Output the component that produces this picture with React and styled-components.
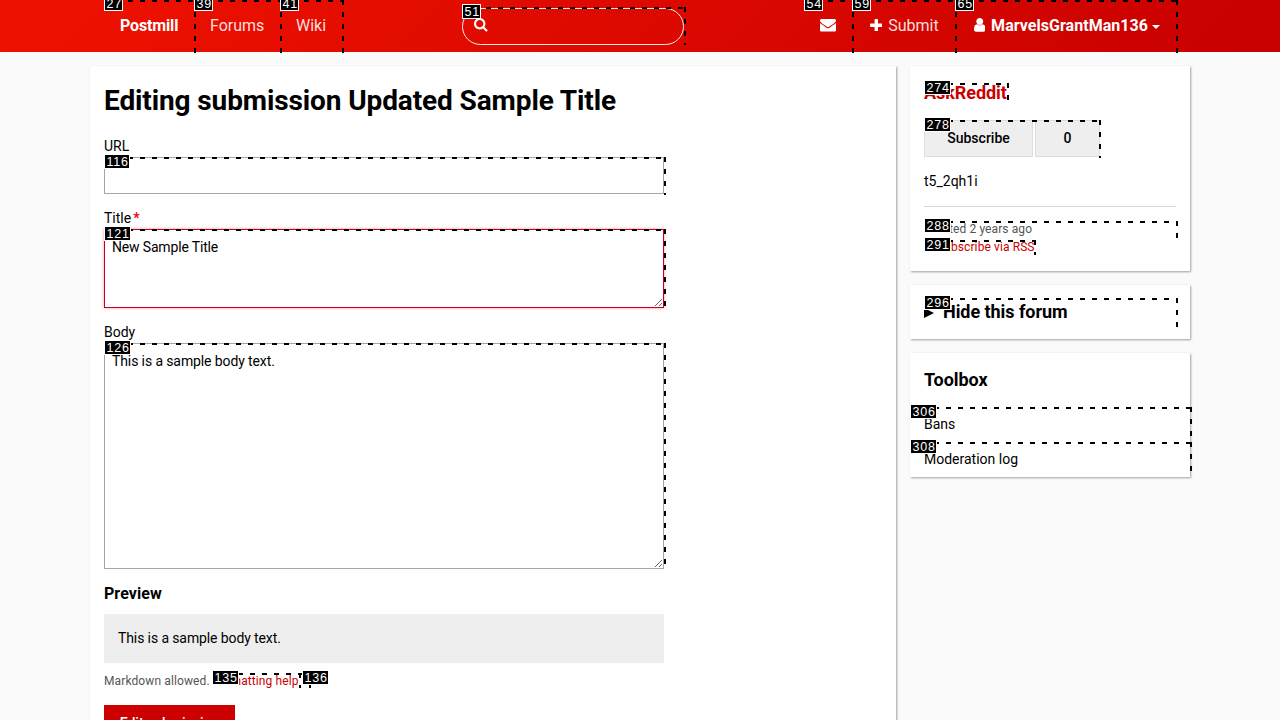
import React from "react";
import styled, { createGlobalStyle } from "styled-components";

const GlobalStyle = createGlobalStyle`
  *, *::before, *::after { box-sizing: border-box; }
  html, body { margin: 0; height: 720px; overflow: hidden; }
  body {
    background: #fafafa;
    color: #000;
    font: 14px/21px Roboto, "Liberation Sans", sans-serif;
  }
`;

const Page = styled.div`
  position: relative;
  width: 1280px;
  height: 720px;
  overflow: hidden;
`;

const Header = styled.header`
  height: 52px;
  padding: 0 104px;
  display: flex;
  align-items: center;
  justify-content: space-between;
  background: linear-gradient(135deg, #f01200, #c80000);
`;

const Nav = styled.nav`
  display: flex;
  height: 100%;
`;

const NavItem = styled.a`
  display: flex;
  align-items: center;
  width: ${(p) => p.$width}px;
  padding: 0 0 2px 16px;
  font-size: 16px;
  font-weight: ${(p) => (p.$bold ? 700 : 400)};
  letter-spacing: ${(p) => p.$spacing || 0}px;
  white-space: nowrap;
  color: ${(p) => (p.$bold ? "#fff" : "rgba(255, 255, 255, 0.88)")};
`;

const Icon = styled.svg`
  display: block;
  flex: none;
  fill: ${(p) => p.$fill || "#fff"};
  margin: ${(p) => p.$margin || 0};
`;

const Caret = styled.span`
  margin: 3px 0 0 4px;
  border: 4px solid transparent;
  border-top-color: #fff;
  border-bottom: 0;
`;

const SearchBox = styled.div`
  width: 222px;
  height: 37px;
  margin-top: 1px;
  padding: 9px 11px;
  border: 1px solid rgba(255, 255, 255, 0.9);
  border-radius: 19px;
`;

const Columns = styled.div`
  display: flex;
  align-items: flex-start;
  gap: 14px;
  padding: 14px 90px 0;
`;

const Card = styled.section`
  background: #fff;
  padding: ${(p) => p.$pad || "14px"};
  box-shadow: 1px 1px 2px rgba(0, 0, 0, 0.36);
`;

const MainCard = styled(Card)`
  width: 806px;
  height: 700px;
`;

const Sidebar = styled.aside`
  width: 280px;
  display: flex;
  flex-direction: column;
  gap: 14px;
`;

const PageTitle = styled.h1`
  margin: 0 0 13px;
  font-size: 28px;
  line-height: 42px;
  font-weight: 700;
  letter-spacing: -0.11px;
`;

const Form = styled.form`
  width: 560px;
`;

const Field = styled.div`
  display: flex;
  flex-direction: column;
  margin-bottom: 13px;
`;

const Label = styled.label`
  line-height: 22px;
  word-spacing: -0.8px;
`;

const Required = styled.b`
  margin-left: -0.5px;
  color: #e02;
`;

const TextInput = styled.input`
  height: 37px;
  border: 1px solid #a6a6a6;
  padding: 7px;
  outline: 0;
  background: #fff;
`;

const TextArea = styled.textarea`
  display: block;
  width: 100%;
  height: ${(p) => p.$height}px;
  margin: 0;
  padding: 7px;
  border: 1px solid ${(p) => (p.$invalid ? "#c00020" : "#a6a6a6")};
  box-shadow: ${(p) => (p.$invalid ? "0 0 3px rgba(255, 0, 0, 0.45)" : "none")};
  outline: 0;
  background: #fff;
  color: #000;
  font: inherit;
  letter-spacing: ${(p) => p.$spacing || 0}px;
  resize: vertical;
`;

const PreviewTitle = styled.h3`
  margin: 0 0 8px;
  font-size: 16px;
  line-height: 24px;
  letter-spacing: 0.06px;
`;

const Preview = styled.div`
  padding: 14px;
  height: 49px;
  background: #eee;
  letter-spacing: -0.11px;
`;

const Help = styled.p`
  margin: 9px 0 15px;
  font-size: 12px;
  line-height: 18px;
  letter-spacing: 0.11px;
  color: #555;
`;

const Link = styled.a`
  color: #c00;
`;

const SubmitButton = styled.button`
  display: block;
  width: 131px;
  height: 37px;
  padding: 0;
  border: 0;
  background: #c00;
  color: #fff;
  font: 500 14px/21px Roboto, sans-serif;
`;

const SideTitle = styled.h2`
  margin: 0;
  padding-bottom: 2px;
  font-size: 18px;
  line-height: 25px;
  font-weight: 700;
  letter-spacing: -0.05px;
`;

const SubscribeRow = styled.div`
  display: flex;
  gap: 2px;
  margin: 13px 0 14px;
`;

const SubscribePart = styled.span`
  width: ${(p) => p.$width}px;
  height: 37px;
  border: 1px solid #ddd;
  background: #eee;
  font-weight: 500;
  line-height: 35px;
  text-align: center;
`;

const Description = styled.p`
  margin: 0;
  padding-bottom: 14px;
  border-bottom: 1px solid #d8d8d8;
`;

const Meta = styled.div`
  padding: 13px 0 1px;
  display: flex;
  flex-direction: column;
  font-size: 12px;
  line-height: 18px;
  letter-spacing: 0.1px;
  color: #555;
`;

const FeedLink = styled(Link)`
  display: flex;
  align-items: center;
`;

const Summary = styled.div`
  display: flex;
  align-items: center;
  gap: 9px;
`;

const Arrow = styled.span`
  border: 5px solid transparent;
  border-left: 10px solid #000;
  border-right: 0;
`;

const ToolList = styled.nav`
  display: flex;
  flex-direction: column;
  margin: 13px -14px 0;
`;

const ToolItem = styled.a`
  height: 35px;
  padding: 0 14px;
  line-height: 35px;
`;

const dashes = (direction) =>
  `repeating-linear-gradient(${direction}, #000 0 5px, transparent 5px 12px)`;

const HintBox = styled.div`
  position: absolute;
  pointer-events: none;
  left: ${(p) => p.$x}px;
  top: ${(p) => p.$y}px;
  width: ${(p) => p.$w + 2}px;
  height: ${(p) => p.$h}px;
  background:
    ${dashes("to right")} 0 0 / calc(100% - 2px) 2px no-repeat,
    ${dashes("to bottom")} 100% 0 / 2px 100% no-repeat;
`;

const HintLabel = styled.span`
  position: absolute;
  left: ${(p) => p.$x}px;
  top: ${(p) => p.$y}px;
  height: 15px;
  padding: 0 0.4px 0 1.6px;
  border: 1px solid #fff;
  background: #000;
  color: #fff;
  font: 12.5px/14px "Liberation Sans", Arial, sans-serif;
  letter-spacing: 0.7px;
`;

/* id, box x, box y, box width, box height, label x, label y */
const hints = [
  [27, 104, 0, 90, 53, 104, -4],
  [39, 194, 0, 86, 53, 194, -4],
  [41, 280, 0, 62, 53, 280, -4],
  [51, 462, 7, 222, 38, 462, 4],
  [54, 804, 0, 48, 53, 804, -4],
  [59, 852, 0, 103, 53, 852, -4],
  [65, 955, 0, 221, 53, 955, -4],
  [116, 104, 157, 560, 38, 104, 154],
  [121, 104, 229, 560, 78, 104, 226],
  [126, 104, 343, 560, 225, 104, 340],
  [135, 214, 673, 85, 15, 212, 670],
  [136, 301, 673, 8, 15, 302, 670],
  [274, 924, 83, 83, 18, 924, 80],
  [278, 924, 120, 175, 38, 924, 117],
  [288, 924, 221, 252, 18, 924, 218],
  [291, 924, 240, 110, 15, 924, 237],
  [296, 924, 298, 252, 29, 924, 295],
  [306, 910, 407, 280, 35, 910, 404],
  [308, 910, 442, 280, 29, 910, 439],
];

const SEARCH =
  "M1216 832q0-185-131.5-316.5t-316.5-131.5-316.5 131.5-131.5 316.5 131.5 316.5 316.5 131.5 316.5-131.5 131.5-316.5zm512 832q0 52-38 90t-90 38q-54 0-90-38l-343-342q-179 124-399 124-143 0-273.5-55.5t-225-150-150-225-55.5-273.5 55.5-273.5 150-225 225-150 273.5-55.5 273.5 55.5 225 150 150 225 55.5 273.5q0 220-124 399l343 343q37 37 37 90z";
const MAIL =
  "M1792 710v794q0 66-47 113t-113 47h-1472q-66 0-113-47t-47-113v-794q44 49 101 87 362 246 497 345 57 42 92.5 65.5t94.5 48 110 24.5h2q51 0 110-24.5t94.5-48 92.5-65.5q170-123 498-345 57-39 100-87zm0-294q0 79-49 151t-122 123q-376 261-468 325-10 7-42.5 31t-54 38.5-52 32.5-57.5 27-50 9h-2q-23 0-50-9t-57.5-27-52-32.5-54-38.5-42.5-31q-91-64-262-182.5t-205-142.5q-62-42-117-115.5t-55-136.5q0-78 41.5-130t118.5-52h1472q65 0 112.5 47t47.5 113z";
const PLUS =
  "M1600 736v192q0 40-28 68t-68 28h-416v416q0 40-28 68t-68 28h-192q-40 0-68-28t-28-68v-416h-416q-40 0-68-28t-28-68v-192q0-40 28-68t68-28h416v-416q0-40 28-68t68-28h192q40 0 68 28t28 68v416h416q40 0 68 28t28 68z";
const USER =
  "M1536 1399q0 109-62.5 187t-150.5 78h-854q-88 0-150.5-78t-62.5-187q0-85 8.5-160.5t31.5-152 58.5-131 94-89 134.5-34.5q131 128 313 128t313-128q76 0 134.5 34.5t94 89 58.5 131 31.5 152 8.5 160.5zm-256-887q0 159-112.5 271.5t-271.5 112.5-271.5-112.5-112.5-271.5 112.5-271.5 271.5-112.5 271.5 112.5 112.5 271.5z";
const FEED =
  "M0 0a10 10 0 0 1 10 10h-1.6a8.4 8.4 0 0 0-8.4-8.4zM0 3.4a6.6 6.6 0 0 1 6.6 6.6h-1.6a5 5 0 0 0-5-5zM0 8.6a1.4 1.4 0 1 1 2.8 0a1.4 1.4 0 1 1-2.8 0z";

export default function App() {
  return (
    <Page>
      <GlobalStyle />
      <Header>
        <Nav>
          <NavItem $bold $width={90} $spacing={-0.15}>
            Postmill
          </NavItem>
          <NavItem $width={86}>Forums</NavItem>
          <NavItem $width={62}>Wiki</NavItem>
        </Nav>
        <SearchBox>
          <Icon viewBox="64 128 1664 1664" width="13.5" height="13.5">
            <path d={SEARCH} />
          </Icon>
        </SearchBox>
        <Nav>
          <NavItem $width={48}>
            <Icon viewBox="0 256 1792 1408" width="16" height="12.6" $margin="1px 0 0">
              <path d={MAIL} />
            </Icon>
          </NavItem>
          <NavItem $width={103}>
            <Icon viewBox="192 128 1408 1408" width="12.6" height="12.6" $margin="0 6px 0 1.6px">
              <path d={PLUS} />
            </Icon>
            Submit
          </NavItem>
          <NavItem $bold $width={221} $spacing={0.04}>
            <Icon viewBox="256 128 1280 1536" width="11.5" height="13.8" $margin="0 6px 0 2.6px">
              <path d={USER} />
            </Icon>
            MarvelsGrantMan136
            <Caret />
          </NavItem>
        </Nav>
      </Header>

      <Columns>
        <MainCard as="main">
          <PageTitle>Editing submission Updated Sample Title</PageTitle>
          <Form>
            <Field>
              <Label>URL</Label>
              <TextInput />
            </Field>
            <Field>
              <Label>
                Title <Required>*</Required>
              </Label>
              <TextArea $height={79} $invalid $spacing={-0.16} defaultValue="New Sample Title" />
            </Field>
            <Field>
              <Label>Body</Label>
              <TextArea $height={226} $spacing={-0.11} defaultValue="This is a sample body text." />
            </Field>
            <PreviewTitle>Preview</PreviewTitle>
            <Preview>This is a sample body text.</Preview>
            <Help>
              Markdown allowed. <Link>Formatting help</Link>
            </Help>
            <SubmitButton type="button">Edit submission</SubmitButton>
          </Form>
        </MainCard>

        <Sidebar>
          <Card>
            <SideTitle>
              <Link>AskReddit</Link>
            </SideTitle>
            <SubscribeRow>
              <SubscribePart $width={109}>Subscribe</SubscribePart>
              <SubscribePart $width={65}>0</SubscribePart>
            </SubscribeRow>
            <Description>t5_2qh1i</Description>
            <Meta>
              <span>Created 2 years ago</span>
              <FeedLink>
                <Icon viewBox="0 0 10 10" width="9" height="9" $fill="#c00" $margin="0 3px 2px 1px">
                  <path d={FEED} />
                </Icon>
                Subscribe via RSS
              </FeedLink>
            </Meta>
          </Card>
          <Card $pad="14px 14px 13px">
            <Summary>
              <Arrow />
              <SideTitle>Hide this forum</SideTitle>
            </Summary>
          </Card>
          <Card $pad="14px 14px 0">
            <SideTitle>Toolbox</SideTitle>
            <ToolList>
              <ToolItem>Bans</ToolItem>
              <ToolItem>Moderation log</ToolItem>
            </ToolList>
          </Card>
        </Sidebar>
      </Columns>

      {hints.map(([id, x, y, w, h]) => (
        <HintBox key={id} $x={x} $y={y} $w={w} $h={h} />
      ))}
      {hints.map(([id, , , , , x, y]) => (
        <HintLabel key={id} $x={x} $y={y}>
          {id}
        </HintLabel>
      ))}
    </Page>
  );
}
